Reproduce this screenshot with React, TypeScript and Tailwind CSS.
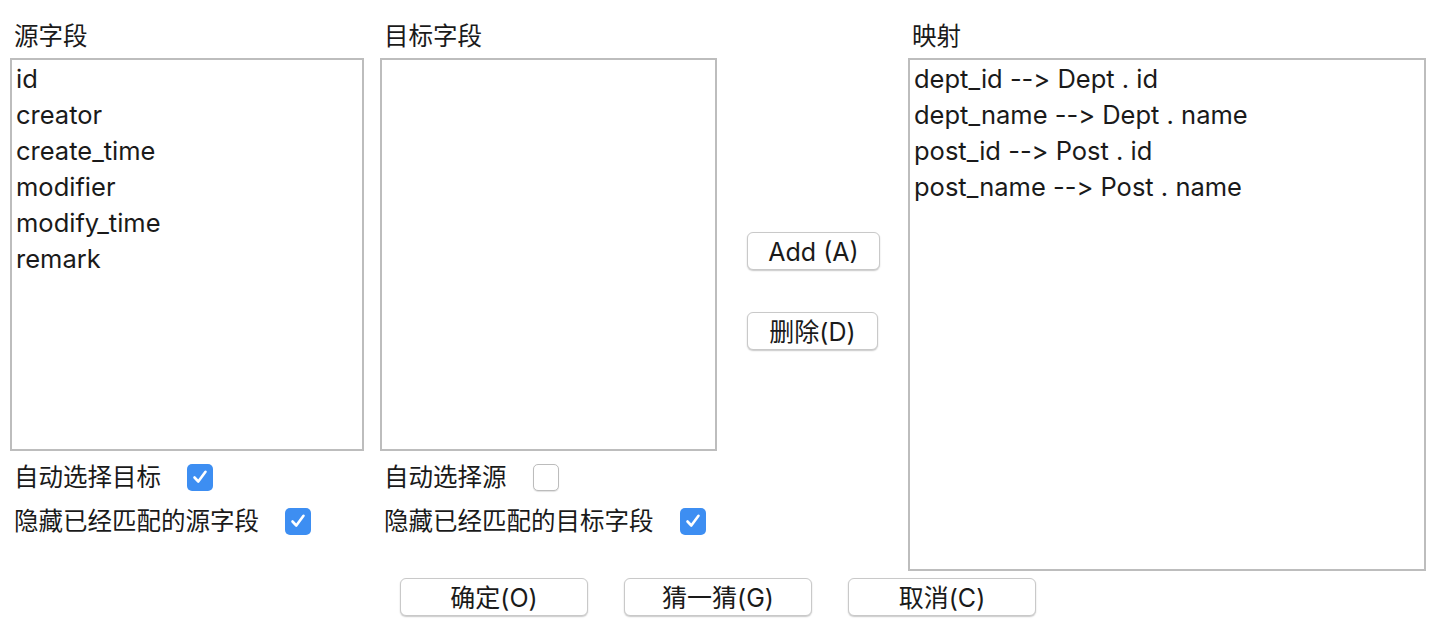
import React from "react";

const FONT = { fontFamily: 'Inter, "Noto Sans CJK SC", sans-serif' };

function Check({ checked }: { checked: boolean }) {
  if (checked) {
    return (
      <div className="w-[26px] h-[27px] rounded-[5px] bg-[#3d8ef2] flex items-center justify-center shrink-0">
        <svg width="18" height="18" viewBox="0 0 18 18">
          <path d="M3.5 9.5 L7.3 13.5 L14.5 3.8" fill="none" stroke="white" strokeWidth="2.6" strokeLinecap="round" strokeLinejoin="round" />
        </svg>
      </div>
    );
  }
  return (
    <div className="w-[26px] h-[27px] rounded-[5px] bg-white border border-[#bcbcbc] shadow-[0_1px_1px_rgba(0,0,0,0.12)] shrink-0" />
  );
}

function CheckRow({ label, checked }: { label: string; checked: boolean }) {
  return (
    <div className="h-[44px] flex items-center gap-[26px] pl-[4px]">
      <span className="text-[24.5px] leading-[28px] text-[#1a1a1a]">{label}</span>
      <Check checked={checked} />
    </div>
  );
}

function Btn({ label, className }: { label: string; className: string }) {
  return (
    <div
      className={
        "h-[38px] rounded-[6px] bg-white border border-[#c9c9c9] shadow-[0_1px_1.5px_rgba(0,0,0,0.22)] flex items-center justify-center text-[25px] leading-[30px] text-[#1a1a1a] pt-[1px] " +
        className
      }
    >
      {label}
    </div>
  );
}

function ListBox({ items, className }: { items: string[]; className: string }) {
  return (
    <div className={"border-2 border-[#bdbdbd] bg-white pl-[4px] " + className}>
      {items.map((t) => (
        <div
          key={t}
          className="h-[36px] pt-[3px] flex items-center text-[25.5px] text-[#1a1a1a] whitespace-nowrap [font-feature-settings:'calt'_0] [font-variant-ligatures:none]"
        >
          {t}
        </div>
      ))}
    </div>
  );
}

export default function App() {
  return (
    <div className="w-[1436px] h-[642px] bg-white overflow-hidden pt-[22px] px-[10px]" style={FONT}>
      <div className="flex items-start">
        {/* source column */}
        <div className="w-[354px] shrink-0">
          <div className="h-[28px] mb-[8px] pl-[4px] text-[24.5px] leading-[28px] text-[#1a1a1a]">源字段</div>
          <ListBox
            className="h-[393px]"
            items={["id", "creator", "create_time", "modifier", "modify_time", "remark"]}
          />
          <div className="mt-[4px]">
            <CheckRow label="自动选择目标" checked={true} />
            <CheckRow label="隐藏已经匹配的源字段" checked={true} />
          </div>
        </div>

        {/* target column */}
        <div className="w-[337px] shrink-0 ml-[16px]">
          <div className="h-[28px] mb-[8px] pl-[4px] text-[24.5px] leading-[28px] text-[#1a1a1a]">目标字段</div>
          <ListBox className="h-[393px]" items={[]} />
          <div className="mt-[4px]">
            <CheckRow label="自动选择源" checked={false} />
            <CheckRow label="隐藏已经匹配的目标字段" checked={true} />
          </div>
        </div>

        {/* middle buttons */}
        <div className="w-[191px] shrink-0 pl-[30px] pt-[210px] flex flex-col">
          <Btn label="Add (A)" className="w-[133px]" />
          <Btn label="删除(D)" className="w-[131px] mt-[42px]" />
        </div>

        {/* mapping column */}
        <div className="w-[518px] shrink-0">
          <div className="h-[28px] mb-[8px] pl-[4px] text-[24.5px] leading-[28px] text-[#1a1a1a]">映射</div>
          <ListBox
            className="h-[513px]"
            items={[
              "dept_id --> Dept . id",
              "dept_name --> Dept . name",
              "post_id --> Post . id",
              "post_name --> Post . name",
            ]}
          />
        </div>
      </div>

      <div className="flex justify-center gap-[36px] mt-[7px]">
        <Btn label="确定(O)" className="w-[188px]" />
        <Btn label="猜一猜(G)" className="w-[188px]" />
        <Btn label="取消(C)" className="w-[188px]" />
      </div>
    </div>
  );
}
